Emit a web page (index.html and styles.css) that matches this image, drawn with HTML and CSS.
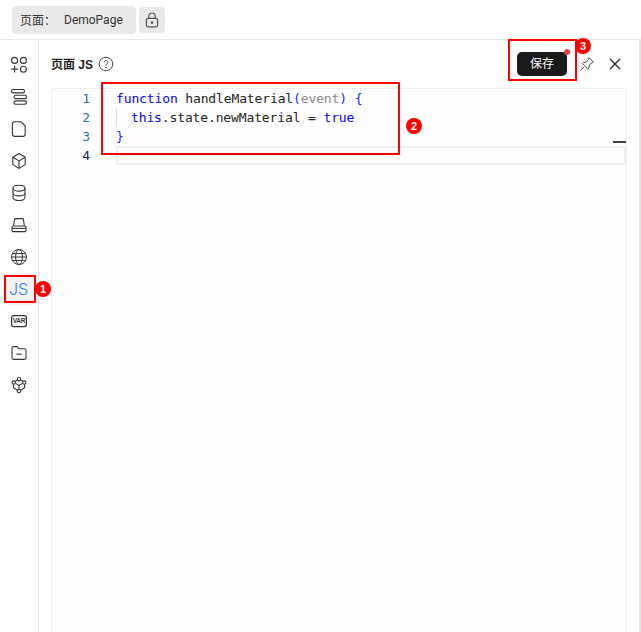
FILE: index.html
```html
<!DOCTYPE html>
<html lang="zh">
<head>
<meta charset="utf-8">
<title>页面 JS</title>
<link rel="stylesheet" href="styles.css">
</head>
<body>
<div class="app">
  <header class="topbar">
    <div class="crumb"><span class="crumb-label">页面：</span><span class="crumb-name">DemoPage</span></div>
    <button class="lock" aria-label="lock">
      <svg width="16" height="16" viewBox="0 0 16 16" fill="none" stroke="#555" stroke-width="1.2"><rect x="2.4" y="6.4" width="11.2" height="8.4" rx="1.8"/><path d="M4.8 6.4V4.2a3.2 3.2 0 0 1 6.4 0v2.2"/><circle cx="8" cy="10.6" r=".7" fill="#555"/></svg>
    </button>
  </header>
  <div class="main">
    <nav class="sidebar">
      <div class="nav-item"><svg width="18" height="18" viewBox="0 0 18 18" fill="none" stroke="#333" stroke-width="1.1"><circle cx="4.6" cy="4.4" r="3"/><circle cx="13.4" cy="4.4" r="3"/><circle cx="13.4" cy="13.2" r="3"/><path d="M4.6 9.6v7M1.2 13.1h6.9"/></svg></div>
      <div class="nav-item"><svg width="18" height="18" viewBox="0 0 18 18" fill="none" stroke="#333" stroke-width="1.1"><rect x="1.5" y="1.5" width="13" height="3.4" rx="1.7"/><rect x="4" y="7.2" width="12.5" height="3.4" rx="1.7"/><rect x="4" y="12.9" width="12.5" height="3.4" rx="1.7"/></svg></div>
      <div class="nav-item"><svg width="18" height="18" viewBox="0 0 18 18" fill="none" stroke="#333" stroke-width="1.1"><path d="M4.6 1.8h6.6l4 4.2v8a2.4 2.4 0 0 1-2.4 2.4H4.6A2.4 2.4 0 0 1 2.4 14V4.2a2.4 2.4 0 0 1 2.2-2.4z"/></svg></div>
      <div class="nav-item"><svg width="18" height="18" viewBox="0 0 18 18" fill="none" stroke="#333" stroke-width="1.1" stroke-linejoin="round"><path d="M9 1.6l6.2 3.6v7.4L9 16.4l-6.2-3.8V5.2z"/><path d="M2.8 5.2L9 8.9l6.2-3.7M9 8.9v7.5"/></svg></div>
      <div class="nav-item"><svg width="18" height="18" viewBox="0 0 18 18" fill="none" stroke="#333" stroke-width="1.1"><ellipse cx="9" cy="4.2" rx="6" ry="2.9"/><path d="M3 4.2v9.4c0 1.6 2.7 2.9 6 2.9s6-1.3 6-2.9V4.2M3 9c0 1.6 2.7 2.9 6 2.9s6-1.3 6-2.9"/></svg></div>
      <div class="nav-item"><svg width="18" height="18" viewBox="0 0 18 18" fill="none" stroke="#333" stroke-width="1.1"><path d="M3.6 9.6l1-6a1.2 1.2 0 0 1 1.2-1h6.4a1.2 1.2 0 0 1 1.2 1l1 6"/><rect x="2" y="10" width="14" height="5.6" rx="1.2"/><path d="M2 12.4h14"/></svg></div>
      <div class="nav-item"><svg width="18" height="18" viewBox="0 0 18 18" fill="none" stroke="#333" stroke-width="1"><circle cx="9" cy="9" r="7.5"/><ellipse cx="9" cy="9" rx="3.4" ry="7.5"/><path d="M1.5 9h15M2.6 5.6h12.8M2.6 12.4h12.8"/></svg></div>
      <div class="nav-item js-item">JS</div>
      <div class="nav-item"><svg width="18" height="18" viewBox="0 0 18 18" fill="none"><rect x="1.6" y="3.6" width="14.8" height="11" rx="2" stroke="#333" stroke-width="1.2"/><text class="var-text" x="9" y="11.3" text-anchor="middle">VAR</text></svg></div>
      <div class="nav-item"><svg width="18" height="18" viewBox="0 0 18 18" fill="none" stroke="#333" stroke-width="1.1"><path d="M2 4.2a1.6 1.6 0 0 1 1.6-1.6h3.2l2 2.2h5.6A1.6 1.6 0 0 1 16 6.4v7.4a1.6 1.6 0 0 1-1.6 1.6H3.6A1.6 1.6 0 0 1 2 13.8z"/><path d="M6.4 10.2h5.2"/></svg></div>
      <div class="nav-item"><svg width="18" height="18" viewBox="0 0 18 18" fill="none" stroke="#333" stroke-width="1.1"><circle cx="9" cy="3.2" r="1.7"/><circle cx="3.8" cy="6.6" r="1.7"/><circle cx="14.2" cy="6.6" r="1.7"/><circle cx="9" cy="15" r="1.7"/><path d="M7.4 3.9L5.4 5.3M10.6 3.9l2 1.4M3.4 8.4v3.4l4 2.4M14.6 8.4v3.4l-4 2.4M5.6 7.4L9 9.4l3.4-2M9 9.4v3.8"/></svg></div>
    </nav>
    <section class="panel">
      <div class="panel-head">
        <div class="title"><span class="title-text">页面 JS</span>
          <svg width="16" height="16" viewBox="0 0 16 16" fill="none" stroke="#444" stroke-width="1"><circle cx="8" cy="8" r="6.8"/><path d="M6.2 6.3a1.8 1.8 0 1 1 2.7 1.6c-.6.4-.9.7-.9 1.5"/><circle cx="8" cy="11.4" r=".4" fill="#444"/></svg>
        </div>
        <div class="actions">
          <button class="save">保存<span class="dot"></span></button>
          <svg class="pin" width="16" height="16" viewBox="0 0 16 16" fill="none" stroke="#444" stroke-width="1"><path d="M10 1.6l4.4 4.4-1.1.6-3 2.4-.4 3-1.1 1.1-5.5-5.5 1.1-1.1 3-.4 2.2-3.1zM5 11l-3.4 3.4"/></svg>
          <svg class="close" width="14" height="14" viewBox="0 0 14 14" fill="none" stroke="#222" stroke-width="1.3"><path d="M2 2l10 10M12 2L2 12"/></svg>
        </div>
      </div>
      <div class="editor">
        <div class="gutter"><div>1</div><div>2</div><div>3</div><div class="cur">4</div></div>
        <div class="code">
          <div class="line"><span class="kw">function</span> handleMaterial<span class="br">(</span><span class="param">event</span><span class="br">)</span> <span class="br">{</span></div>
          <div class="line"><span class="guide"></span><span class="kw">this</span>.state.newMaterial = <span class="kw">true</span></div>
          <div class="line"><span class="br">}</span></div>
          <div class="line current"></div>
        </div>
        <div class="tick"></div>
      </div>
    </section>
    <div class="scroll-edge"></div>
  </div>
  <div class="mark mark-js"></div><span class="badge badge-1">1</span>
  <div class="mark mark-code"></div><span class="badge badge-2">2</span>
  <div class="mark mark-save"></div><span class="badge badge-3">3</span>
</div>
</body>
</html>
```
FILE: styles.css
```css
* { box-sizing: border-box; }
html, body { margin: 0; height: 100%; }
body { background: #fff; font-family: "Liberation Sans", "Noto Sans CJK SC", sans-serif; color: #222; overflow: hidden; }
.app { position: relative; display: flex; flex-direction: column; height: 632px; width: 641px; }
.topbar { height: 40px; flex: none; display: flex; align-items: flex-start; gap: 3px; padding: 6px 0 0 12px; border-bottom: 1px solid #e6e6e6; }
.crumb { height: 28px; width: 124px; background: #e9e9e9; border-radius: 4px; display: flex; align-items: center; padding: 0 0 1px 8px; font-size: 12px; color: #333; font-family: Roboto, "Noto Sans CJK SC", sans-serif; }
.crumb-label { width: 44px; }
.lock { width: 26px; height: 26px; margin-top: 1px; border: 0; padding: 0; background: #e9e9e9; border-radius: 4px; display: flex; align-items: center; justify-content: center; }
.main { flex: 1; display: flex; min-height: 0; }
.sidebar { width: 39px; flex: none; border-right: 1px solid #e2e2e2; padding-top: 9px; display: flex; flex-direction: column; }
.nav-item { height: 32px; display: flex; align-items: center; justify-content: center; padding-right: 1px; }
.var-text { font: 700 6.5px "Liberation Sans", sans-serif; fill: #333; letter-spacing: -.2px; }
.js-item { color: #2d7ff0; font-size: 16px; font-family: "Inter", "Liberation Sans", sans-serif; font-weight: 300; background: #f3f3f3; width: 28px; margin-left: 5px; padding: 0 1px 0 0; }
.panel { flex: 1; min-width: 0; display: flex; flex-direction: column; padding: 0 0 0 12px; }
.panel-head { height: 48px; flex: none; display: flex; justify-content: space-between; align-items: center; padding-right: 6px; }
.title { display: flex; align-items: center; gap: 5px; padding-bottom: 1px; }
.title-text { font-size: 12px; font-weight: 700; }
.actions { display: flex; align-items: center; }
.save { position: relative; width: 50px; height: 24px; border: 0; border-radius: 5px; background: #1a1a1a; color: #fff; font-size: 12px; font-family: "Noto Sans CJK SC", sans-serif; padding: 0 0 2px; margin-top: -1px; }
.dot { position: absolute; top: -3px; right: -3px; width: 6px; height: 6px; border-radius: 50%; background: #f04142; }
.pin { margin-left: 12px; }
.close { margin-left: 13px; }
.editor { position: relative; flex: 1; min-height: 0; width: 576px; display: flex; background: #fffefe; border: 1px solid #eee; border-bottom: 0; border-radius: 3px 3px 0 0; font-family: "DejaVu Sans Mono", monospace; font-size: 13px; letter-spacing: -.13px; line-height: 19px; color: #222; }
.gutter { width: 38px; flex: none; text-align: right; color: #237893; }
.cur { color: #0b216f; }
.code { flex: 1; margin-left: 26px; }
.line { height: 19px; white-space: pre; position: relative; }
.line:nth-child(2) { padding-left: 15px; }
.guide { position: absolute; left: 0; top: 0; bottom: 0; border-left: 1px solid #ddd; }
.current { border: 2px solid #eee; height: 19px; }
.kw { color: #0000ff; }
.br { color: #0431fa; }
.param { color: #888; }
.tick { position: absolute; right: 0; top: 52px; width: 13px; height: 2px; background: #444; }
.scroll-edge { width: 2px; flex: none; margin-left: 11px; background: #e2e2e2; }
.mark { position: absolute; border: 2px solid #f00; }
.mark-js { left: 4px; top: 275px; width: 32px; height: 28px; }
.mark-code { left: 101px; top: 82px; width: 299px; height: 73px; }
.mark-save { left: 508px; top: 39px; width: 69px; height: 42px; }
.badge { position: absolute; width: 16px; height: 16px; border-radius: 50%; background: #f00; color: #fff; font-size: 11px; font-weight: 700; line-height: 16px; text-align: center; font-family: "Liberation Sans", sans-serif; }
.badge-1 { left: 35px; top: 281px; }
.badge-2 { left: 406px; top: 118px; }
.badge-3 { left: 575px; top: 38px; }
```
